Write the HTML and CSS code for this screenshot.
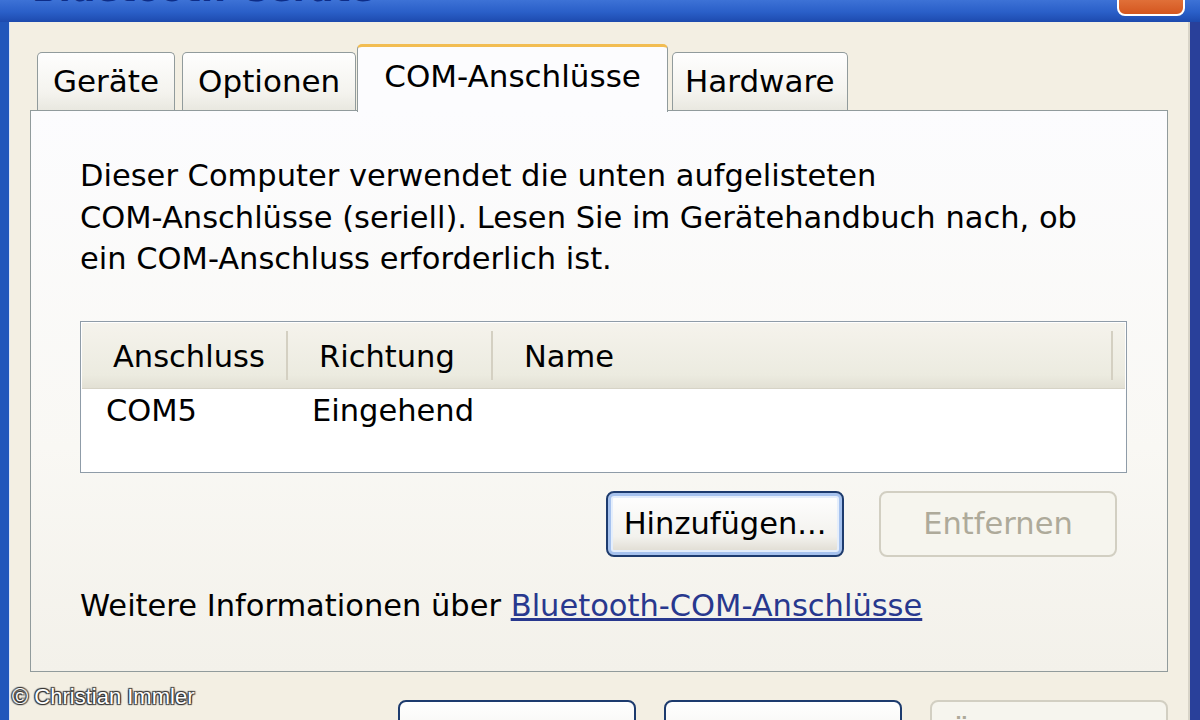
FILE: index.html
```html
<!DOCTYPE html>
<html lang="de">
<head>
    <meta charset="UTF-8">
    <title>Bluetooth-Geräte</title>
    <link rel="stylesheet" href="styles.css">
</head>
<body>
    <div class="window">
        <div class="titlebar">
            <span class="title">Bluetooth-Geräte</span>
            <span class="close-btn"></span>
        </div>
        <div class="frame">
            <div class="dialog">
                <div class="tabs">
                    <div class="tab">Geräte</div>
                    <div class="tab">Optionen</div>
                    <div class="tab active">COM-Anschlüsse</div>
                    <div class="tab">Hardware</div>
                </div>
                <div class="panel">
                    <p class="intro">
                        Dieser Computer verwendet die unten aufgelisteten<br>
                        COM-Anschlüsse (seriell). Lesen Sie im Gerätehandbuch nach, ob<br>
                        ein COM-Anschluss erforderlich ist.
                    </p>
                    <div class="listview">
                        <div class="lv-head">
                            <div class="lv-col">Anschluss</div>
                            <div class="lv-col">Richtung</div>
                            <div class="lv-col">Name</div>
                            <div class="lv-col lv-rest"></div>
                        </div>
                        <div class="lv-row">
                            <div class="lv-cell">COM5</div>
                            <div class="lv-cell">Eingehend</div>
                            <div class="lv-cell"></div>
                        </div>
                    </div>
                    <div class="panel-buttons">
                        <button class="xp-btn focused">Hinzufügen...</button>
                        <button class="xp-btn" disabled>Entfernen</button>
                    </div>
                    <p class="more-info">Weitere Informationen über <a href="#">Bluetooth-COM-Anschlüsse</a></p>
                </div>
                <div class="dialog-buttons">
                    <button class="xp-btn">OK</button>
                    <button class="xp-btn">Abbrechen</button>
                    <button class="xp-btn" disabled>Übernehmen</button>
                </div>
            </div>
        </div>
        <div class="watermark">© Christian Immler</div>
    </div>
</body>
</html>
```

FILE: styles.css
```css
:root {
    --xp-face: #f3efe3;
    --xp-border: #919b9c;
    --xp-blue: #2156bb;
    --xp-blue-dark: #29409a;
    --link-color: #28388e;
    --disabled-text: #aeaa9a;
}

body {
    margin: 0;
    width: 1200px;
    height: 720px;
    overflow: hidden;
    font-family: "DejaVu Sans", Verdana, sans-serif;
    color: #000;
}

.window {
    position: relative;
    display: flex;
    flex-direction: column;
    width: 1200px;
    height: 720px;
    overflow: hidden;
    background-color: var(--xp-blue);
}

.titlebar {
    position: relative;
    flex-shrink: 0;
    height: 22px;
    overflow: hidden;
    background: linear-gradient(#3d72d6, #2a5fc8 55%, #1d4aae);
}

.title {
    display: block;
    margin: -33px 0 0 30px;
    font-weight: bold;
    font-size: 35px;
    line-height: 40px;
    color: #c9d8f4;
    text-shadow: 2px 2px #0c2c88;
}

.close-btn {
    position: absolute;
    right: 15px;
    top: -18px;
    width: 64px;
    height: 30px;
    border: 2px solid #fff;
    border-radius: 8px;
    background: linear-gradient(#ee8d55, #d4561f);
}

.frame {
    box-sizing: border-box;
    flex: 1;
    min-height: 0;
    width: 1200px;
    display: flex;
    border-left: 9px solid var(--xp-blue);
    border-right: 10px solid var(--xp-blue-dark);
}

.dialog {
    flex: 1;
    min-width: 0;
    padding: 22px 20px 0 20px;
    background-color: var(--xp-face);
    border-left: 1px solid #dde6f6;
    border-right: 2px solid #d8d4c8;
}

.tabs {
    display: flex;
    align-items: flex-end;
    height: 66px;
    margin-left: 7px;
    position: relative;
    z-index: 1;
}

.tab {
    box-sizing: border-box;
    height: 58px;
    padding: 0 15px;
    margin-right: 7px;
    border: 1px solid var(--xp-border);
    border-bottom: none;
    border-radius: 5px 5px 0 0;
    background: linear-gradient(#fefefe, #f4f3ee 70%, #e9e8e0);
    font-size: 31px;
    line-height: 56px;
    white-space: nowrap;
}

.tab.active {
    height: 68px;
    margin: 0 4px -2px -6px;
    padding: 0 26px;
    border-top: 3px solid #f2bd52;
    background: #fcfcfe;
    line-height: 58px;
}

.tab:last-child {
    padding: 0 12px;
}

.panel {
    box-sizing: border-box;
    height: 562px;
    padding: 44px 40px 0 49px;
    border: 1px solid var(--xp-border);
    background: linear-gradient(#fcfcfe, #f9f8f4 60%, #f3f1ea);
}

.intro {
    margin: 0;
    font-size: 30.5px;
    line-height: 41.5px;
}

.listview {
    box-sizing: border-box;
    height: 152px;
    margin-top: 41px;
    padding: 1px;
    border: 1px solid #8f9ca8;
    background-color: #fff;
}

.lv-head,
.lv-row {
    display: grid;
    grid-template-columns: 206px 205px 620px 1fr;
    font-size: 30.5px;
}

.lv-head {
    height: 65px;
    background: linear-gradient(#f5f3ec, #ecebe0 80%, #e2e0d4);
    border-bottom: 1px solid #d6d3c6;
}

.lv-col {
    display: flex;
    align-items: center;
    padding: 2px 0 0 31px;
    margin: 8px 0;
    border-right: 2px solid #d4d0c2;
}

.lv-col.lv-rest {
    border-right: none;
}

.lv-row {
    height: 44px;
    align-items: center;
}

.lv-cell {
    padding-left: 24px;
}

.panel-buttons {
    display: flex;
    justify-content: flex-end;
    gap: 35px;
    margin-top: 18px;
    padding-right: 10px;
}

.xp-btn {
    box-sizing: border-box;
    width: 238px;
    height: 66px;
    padding: 0;
    border: 2px solid #1d3b6e;
    border-radius: 8px;
    background: linear-gradient(#ffffff, #f3f2ee 70%, #dcd8cd);
    font-family: inherit;
    font-size: 30.5px;
    color: #000;
}

.xp-btn.focused {
    box-shadow: inset 0 0 0 3px #a6c2ee, inset 0 0 0 5px #e4eefc;
}

.xp-btn:disabled {
    border-color: #d2cfc2;
    background: #f6f5ee;
    color: var(--disabled-text);
}

.more-info {
    margin: 28px 0 0 0;
    font-size: 30.5px;
    line-height: 42px;
}

.more-info a {
    color: var(--link-color);
    text-decoration: underline;
}

.dialog-buttons {
    display: flex;
    justify-content: flex-end;
    gap: 28px;
    margin-top: 28px;
}

.watermark {
    position: absolute;
    left: 12px;
    top: 684px;
    font-family: "Liberation Sans", Arial, sans-serif;
    font-size: 22px;
    color: #fff;
    text-shadow: 1px 1px 1px #333, -1px -1px 1px #333, 1px -1px 1px #333, -1px 1px 1px #333;
}
```
